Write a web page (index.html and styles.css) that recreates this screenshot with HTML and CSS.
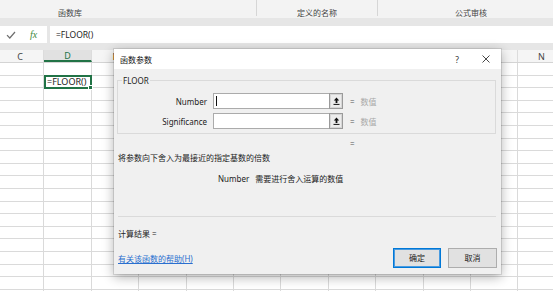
FILE: index.html
```html
<!DOCTYPE html>
<html lang="zh-CN">
<head>
<meta charset="utf-8">
<title>函数参数</title>
<link rel="stylesheet" href="styles.css">
</head>
<body>
<div class="app">
  <div class="ribbon">
    <div class="rgroup g1"><span>函数库</span></div>
    <div class="rgroup g2"><span>定义的名称</span></div>
    <div class="rgroup g3"><span>公式审核</span></div>
  </div>
  <div class="band"></div>
  <div class="fbar">
    <div class="fbtns">
      <svg class="check" width="10" height="8" viewBox="0 0 10 8"><path d="M1 4.2 L3.8 7 L9 1" fill="none" stroke="#6e6e6e" stroke-width="1.2"/></svg>
      <span class="fx">fx</span>
    </div>
    <div class="finput">=FLOOR()</div>
  </div>
  <div class="band2"></div>
  <div class="sheet">
    <div class="colhdr">
      <div class="ch">C</div>
      <div class="ch active">D</div>
      <div class="ch">E</div>
      <div class="ch">F</div>
      <div class="ch">G</div>
      <div class="ch">H</div>
      <div class="ch">I</div>
      <div class="ch">J</div>
      <div class="ch">K</div>
      <div class="ch">L</div>
      <div class="ch">M</div>
      <div class="ch">N</div>
    </div>
    <div class="rows">
      <div class="row"></div>
      <div class="row"><div class="cell sel">=FLOOR()<span class="handle"></span></div></div>
      <div class="row"></div>
      <div class="row"></div>
      <div class="row"></div>
      <div class="row"></div>
      <div class="row"></div>
      <div class="row"></div>
      <div class="row"></div>
      <div class="row"></div>
      <div class="row"></div>
      <div class="row"></div>
      <div class="row"></div>
      <div class="row"></div>
      <div class="row"></div>
      <div class="row"></div>
      <div class="row"></div>
      <div class="row"></div>
      <div class="row"></div>
    </div>
  </div>

  <span class="orange-mark"></span>

  <div class="dialog">
    <div class="dtitle">
      <span class="t">函数参数</span>
      <span class="help">?</span>
      <span class="close">
        <svg width="8" height="8" viewBox="0 0 8 8"><path d="M0.5 0.5 L7.5 7.5 M7.5 0.5 L0.5 7.5" stroke="#333" stroke-width="0.9"/></svg>
      </span>
    </div>
    <fieldset class="group">
      <legend>FLOOR</legend>
      <div class="prow">
        <span class="plabel">Number</span>
        <span class="pinput"><span class="caret"></span>
          <span class="refbtn"><svg width="7" height="8" viewBox="0 0 7 8"><path d="M3.5 0.5 L0.8 3.4 H2.6 V6 H4.4 V3.4 H6.2 Z" fill="#111"/><path d="M0.5 7.4 H6.5" stroke="#111" stroke-width="1"/></svg></span>
        </span>
        <span class="peq">=</span><span class="pval">数值</span>
      </div>
      <div class="prow">
        <span class="plabel">Significance</span>
        <span class="pinput">
          <span class="refbtn"><svg width="7" height="8" viewBox="0 0 7 8"><path d="M3.5 0.5 L0.8 3.4 H2.6 V6 H4.4 V3.4 H6.2 Z" fill="#111"/><path d="M0.5 7.4 H6.5" stroke="#111" stroke-width="1"/></svg></span>
        </span>
        <span class="peq">=</span><span class="pval">数值</span>
      </div>
    </fieldset>
    <div class="reseq">=</div>
    <div class="desc">将参数向下舍入为最接近的指定基数的倍数</div>
    <div class="argdesc"><span class="argname">Number</span>需要进行舍入运算的数值</div>
    <div class="sep"></div>
    <div class="calc">计算结果 =</div>
    <div class="footer">
      <a class="helplink" href="#">有关该函数的帮助(H)</a>
      <button class="btn ok">确定</button>
      <button class="btn">取消</button>
    </div>
  </div>
</div>
</body>
</html>
```

FILE: styles.css
```css
html, body {
  margin: 0;
  padding: 0;
}
body {
  background: #fff;
  font-family: "Noto Sans", "Noto Sans CJK SC", sans-serif;
  font-size: 8px;
  color: #222;
}
.app {
  position: relative;
  width: 553px;
  height: 291px;
  overflow: hidden;
}

/* ribbon */
.ribbon {
  height: 18px;
  background: #f3f3f3;
  display: flex;
}
.rgroup {
  height: 16px;
  box-sizing: border-box;
  padding-top: 6.5px;
  line-height: 11px;
  color: #444;
  flex: none;
}
.g1 {
  width: 257px;
  padding-left: 58px;
  border-right: 1px solid #d6d6d6;
}
.g2 {
  width: 121px;
  text-align: center;
  border-right: 1px solid #d6d6d6;
}
.g3 {
  width: 186px;
  text-align: center;
}
.band {
  height: 8px;
  background: #e6e6e6;
}

/* formula bar */
.fbar {
  height: 17px;
  display: flex;
  background: #e6e6e6;
}
.fbtns {
  width: 47px;
  background: #fff;
  display: flex;
  align-items: center;
}
.check {
  margin-left: 6px;
}
.fx {
  margin-left: 14px;
  font-family: "Liberation Serif", serif;
  font-style: italic;
  font-size: 10px;
  color: #3c8a3c;
}
.finput {
  flex: 1;
  margin-left: 3px;
  background: #fff;
  padding-left: 6px;
  line-height: 17px;
  font-size: 8.5px;
  color: #222;
}
.band2 {
  height: 7px;
  background: #e6e6e6;
}

/* sheet */
.colhdr {
  display: flex;
  margin-left: -3px;
  height: 13px;
  box-sizing: border-box;
  border-bottom: 1px solid #d4d4d4;
  background: #f5f5f5;
}
.ch {
  flex: none;
  width: 47.4px;
  box-sizing: border-box;
  border-right: 1px solid #dcdcdc;
  text-align: center;
  line-height: 13px;
  font-size: 9px;
  color: #444;
}
.ch.active {
  background: #e1e1e1;
  color: #217346;
  border-bottom: 2px solid #217346;
  line-height: 12px;
}
.rows {
  background-image: repeating-linear-gradient(90deg, transparent 0 46.4px, #dadada 46.4px 47.4px);
  background-position: -3px 0;
}
.row {
  height: 12.6px;
  box-sizing: border-box;
  border-bottom: 1px solid #dadada;
  display: flex;
}
.cell.sel {
  position: relative;
  margin-left: 44px;
  margin-top: -1px;
  width: 48px;
  height: 14px;
  box-sizing: border-box;
  border: 2px solid #217346;
  background: #fff;
  font-size: 9px;
  line-height: 10px;
  padding-left: 1px;
  color: #222;
}
.handle {
  position: absolute;
  right: -3px;
  bottom: -3px;
  width: 3px;
  height: 3px;
  background: #217346;
  border: 1px solid #fff;
}
.orange-mark {
  position: absolute;
  left: 113px;
  top: 55px;
  width: 2px;
  height: 5px;
  background: #e6a040;
}

/* dialog */
.dialog {
  position: absolute;
  left: 114px;
  top: 49px;
  width: 387px;
  height: 225px;
  background: #f0f0f0;
  box-shadow: 0 0 0 1px rgba(0, 0, 0, 0.1), 0 3px 11px rgba(0, 0, 0, 0.32);
  display: flex;
  flex-direction: column;
}
.dtitle {
  height: 20px;
  background: #fff;
  display: flex;
  align-items: center;
  flex: none;
}
.dtitle .t {
  flex: 1;
  padding-left: 6px;
  color: #111;
}
.help {
  width: 28px;
  text-align: center;
  font-size: 8.5px;
  color: #333;
}
.close {
  width: 30px;
  display: flex;
  justify-content: center;
  align-items: center;
}
.group {
  margin: 5.5px 5px 0 3px;
  padding: 7.5px 0 4px 0;
  border: 1px solid #dadada;
  min-width: 0;
}
.group legend {
  margin-left: 4px;
  padding: 0 1px;
  line-height: 11px;
  color: #222;
}
.prow {
  display: flex;
  align-items: center;
  height: 16px;
}
.prow + .prow {
  margin-top: 4px;
}
.plabel {
  width: 89px;
  margin-right: 6px;
  text-align: right;
  color: #222;
}
.pinput {
  position: relative;
  width: 130px;
  height: 16px;
  box-sizing: border-box;
  border: 1px solid #ababab;
  background: #fff;
  display: flex;
  justify-content: flex-end;
}
.caret {
  position: absolute;
  left: 2px;
  top: 2px;
  width: 1px;
  height: 10px;
  background: #111;
}
.refbtn {
  width: 14px;
  height: 16px;
  margin: -1px -1px -1px 0;
  box-sizing: border-box;
  border: 1px solid #9a9a9a;
  box-shadow: inset 0 0 0 1px #d6d6d6;
  background: #ececec;
  display: flex;
  align-items: center;
  justify-content: center;
}
.peq {
  margin-left: 7px;
  color: #555;
}
.pval {
  margin-left: 6px;
  color: #a8a8a8;
}
.reseq {
  margin-top: 3.5px;
  padding-left: 236px;
  line-height: 11px;
  color: #555;
}
.desc {
  margin-top: 3px;
  padding-left: 4px;
  line-height: 11px;
}
.argdesc {
  margin-top: 10px;
  padding-left: 104px;
  line-height: 11px;
}
.argname {
  margin-right: 6px;
}
.sep {
  margin: 32.5px 5px 0 4px;
  height: 1px;
  background: #dadada;
}
.calc {
  margin-top: 10.5px;
  padding-left: 4px;
  line-height: 11px;
}
.footer {
  margin-top: 9.5px;
  height: 20px;
  display: flex;
  align-items: center;
  padding: 0 4px;
}
.helplink {
  flex: 1;
  padding-top: 1px;
  color: #2a6fcf;
  text-decoration: underline;
  line-height: 11px;
}
.btn {
  font-family: "Noto Sans", "Noto Sans CJK SC", sans-serif;
  font-size: 8px;
  color: #222;
  height: 20px;
  width: 49px;
  margin: 0 0 0 7px;
  padding: 0;
  border: 1px solid #adadad;
  background: #e1e1e1;
  line-height: 18px;
}
.btn.ok {
  width: 48px;
  margin-left: 0;
  border-color: #0078d7;
  box-shadow: inset 0 0 0 1px #4a9be0;
}
```
